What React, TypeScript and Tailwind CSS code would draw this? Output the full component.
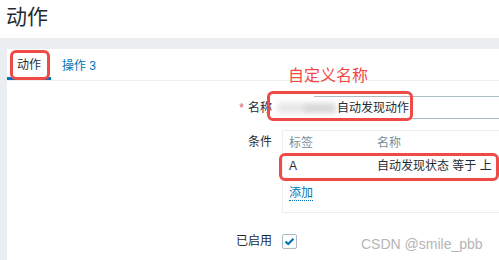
import React from "react";

const font = { fontFamily: '"Liberation Sans", "Noto Sans CJK SC", sans-serif' };

const RedBox: React.FC<{ className: string }> = ({ className }) => (
    <div className={`pointer-events-none absolute rounded-[6px] border-[3px] border-[#f04a47] ${className}`} />
);

const App: React.FC = () => {
    return (
        <div className="relative h-[260px] w-[499px] overflow-hidden bg-[#ebeef0] text-[#1f2c33]" style={font}>
            <div className="h-[38px] bg-white pl-[6px] pt-[2px] text-[21px] leading-[30px]">动作</div>

            <div className="ml-[7px] mt-[11px] h-[300px] w-[600px] bg-white">
                {/* tabs */}
                <div className="flex h-[32px] border-b border-[#ebeef0] text-[12px]">
                    <div className="flex items-center border-b-[3px] border-[#0275b8] px-[10px] pt-[3px]">动作</div>
                    <div className="flex items-center px-[11px] pt-[3px] text-[#0275b8]">操作 3</div>
                </div>

                <div className="pt-[15px] text-[12px]">
                    {/* name */}
                    <div className="flex items-center">
                        <div className="w-[265px] pr-[0px] text-right">
                            <span className="mr-[4px] text-[#e45959]">*</span>名称
                        </div>
                        <div className="relative ml-[9px] flex h-[23px] flex-1 items-center border border-[#acbbc2] pl-[55px]">
                            <div className="absolute left-[-4px] top-[-2px] h-[25px] w-[36px] bg-white" />
                            <div className="absolute left-[-4px] top-[6px] h-[10px] w-[58px] bg-[#e4e4e4] blur-[3px]" />
                            <div className="absolute left-[22px] top-[8px] h-[7px] w-[30px] bg-[#d8d8d8] blur-[2px]" />
                            <span className="relative">自动发现动作</span>
                        </div>
                    </div>

                    {/* conditions */}
                    <div className="mt-[11px] flex">
                        <div className="w-[265px] pt-[3px] text-right leading-[18px]">条件</div>
                        <div className="ml-[10px] flex-1 border border-[#ebeef0] px-[6px] pb-[9px] pt-[2px]">
                            <div className="flex h-[20px] items-center text-[#768d99]">
                                <div className="w-[88px]">标签</div>
                                <div>名称</div>
                            </div>
                            <div className="flex h-[26px] items-center">
                                <div className="w-[88px]">A</div>
                                <div>自动发现状态 等于 上</div>
                            </div>
                            <div className="mt-[4px] flex h-[20px] items-center">
                                <span className="border-b border-dotted border-[#0275b8] leading-[14px] text-[#0275b8]">添加</span>
                            </div>
                        </div>
                    </div>

                    {/* enabled */}
                    <div className="mt-[19px] flex items-center">
                        <div className="w-[265px] text-right">已启用</div>
                        <div className="ml-[10px] flex h-[15px] w-[15px] items-center justify-center rounded-[2px] border border-[#acbbc2] bg-white">
                            <svg width="11" height="9" viewBox="0 0 11 9">
                                <path d="M1.5 4.5 L4.2 7 L9.5 1.8" fill="none" stroke="#0275b8" strokeWidth="2.2" />
                            </svg>
                        </div>
                    </div>
                </div>
            </div>

            {/* annotations */}
            <div className="absolute left-[288px] top-[66px] text-[16px] leading-[20px] text-[#f04a47]">自定义名称</div>
            <RedBox className="left-[10px] top-[50px] h-[30px] w-[40px]" />
            <RedBox className="left-[267px] top-[91px] h-[30px] w-[146px]" />
            <RedBox className="left-[279px] top-[153px] h-[28px] w-[220px]" />
            <div className="absolute left-[361px] top-[235px] text-[14px] leading-[18px] text-[#b5b5b5]">CSDN @smile_pbb</div>
        </div>
    );
};

export default App;
